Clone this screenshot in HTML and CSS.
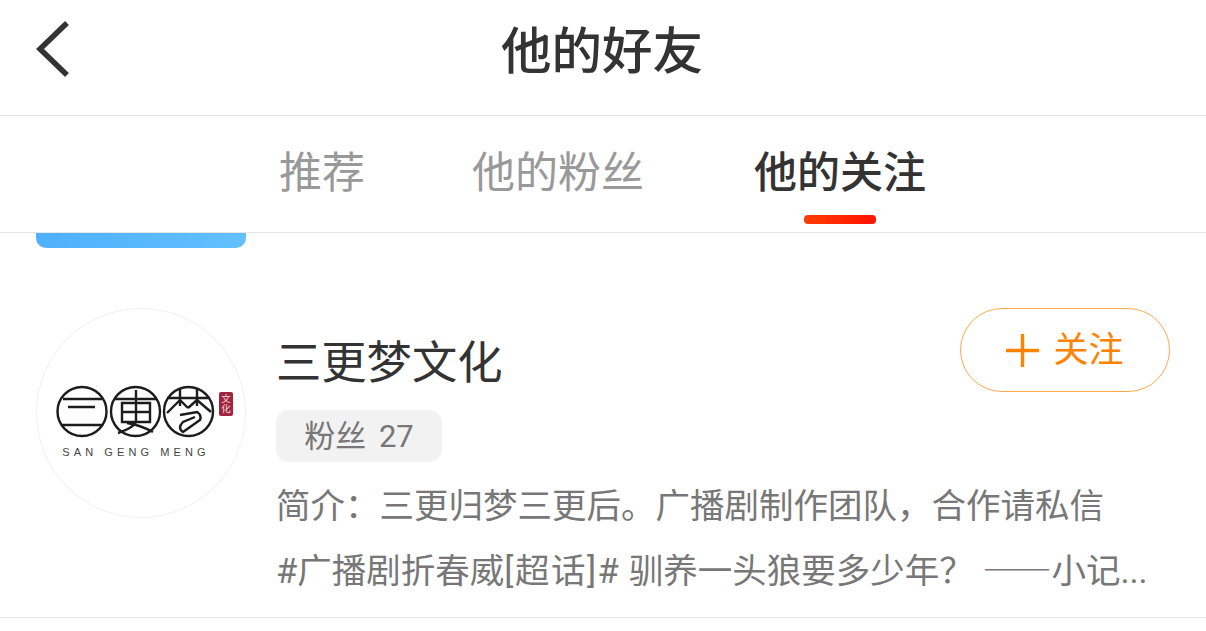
FILE: index.html
```html
<!DOCTYPE html>
<html lang="zh-CN">
<head>
  <meta charset="UTF-8" />
  <meta name="viewport" content="width=device-width, initial-scale=1.0" />
  <title>他的好友</title>
  <link rel="stylesheet" href="styles.css">
</head>
<body>

  <header class="topbar">
    <a class="back" href="#">
      <svg width="36" height="60" viewBox="0 0 36 60">
        <path d="M33 4 L6 30 L33 56" fill="none" stroke="#333" stroke-width="5.5" />
      </svg>
    </a>
    <h1>他的好友</h1>
  </header>

  <nav class="tabs">
    <a class="tab" href="#">推荐</a>
    <a class="tab" href="#">他的粉丝</a>
    <a class="tab active" href="#">他的关注</a>
  </nav>

  <main>
    <div class="strip"></div>

    <section class="user">
      <div class="avatar">
        <svg width="210" height="210" viewBox="0 0 210 210">
          <g fill="none" stroke="#1c1c1c" stroke-width="2.4">
            <!-- logo: three rings -->
            <circle cx="46" cy="103.5" r="24.5" />
            <path d="M27 91 H66 M32 99 H59 M25 117 H67" />
            <circle cx="99.5" cy="103.5" r="24.5" />
            <path d="M79 91 H121 M86 95 H114 V114 H86 Z M86 104 H114 M100 82 V114 Q97 120 82 125 M91 115 Q104 117 117 124" />
            <circle cx="152.5" cy="103.5" r="24.5" />
            <path d="M131 90 H174 M144 80 V98 M161 80 V98 M144 92 L131 105 M144 92 L152 100 M161 92 L152 100 M161 92 L175 104 M144 107 L161 104 Q166 107 164 112 L147 124 Q141 120 147 114 L159 109" />
          </g>
          <rect class="seal" x="183" y="84" width="14" height="24" rx="2" />
          <text class="seal-text" x="190" y="94">文</text>
          <text class="seal-text" x="190" y="104">化</text>
          <text class="logo-name" x="100" y="147.5">SAN GENG MENG</text>
        </svg>
      </div>

      <div class="info">
        <div class="name-row">
          <h2>三更梦文化</h2>
          <button class="follow">
            <svg width="33" height="33" viewBox="0 0 33 33">
              <path d="M1 16.5 H32 M16.5 1 V32" fill="none" stroke="#ff8200" stroke-width="3.4" stroke-linecap="round" />
            </svg>
            <span class="follow-label">关注</span>
          </button>
        </div>
        <div class="fans">粉丝 27</div>
        <p class="bio">简介&#xFF1A;三更归梦三更后。广播剧制作团队&#xFF0C;合作请私信</p>
        <p class="bio">#广播剧折春威<span class="tag">[超话]#</span> 驯养一头狼要多少年&#xFF1F; <span class="dash">——</span>小记...</p>
      </div>
    </section>
  </main>

</body>
</html>
```

FILE: styles.css
```css
body {
  margin: 0;
  font-family: Roboto, "Noto Sans CJK SC", sans-serif;
  background: #fff;
  color: #333;
  overflow: hidden;
}

a {
  text-decoration: none;
}

.topbar {
  height: 104px;
  padding: 0 2px 11px 0;
  border-bottom: 1px solid #e6e6e6;
  display: flex;
  align-items: center;
  justify-content: center;
  position: relative;
}

.topbar h1 {
  margin: 0;
  font-size: 50.5px;
  font-weight: 500;
  line-height: 1;
  color: #333;
}

.back {
  position: absolute;
  left: 34px;
  top: 19px;
  display: block;
  line-height: 0;
}

.tabs {
  height: 116px;
  padding-right: 1px;
  border-bottom: 1px solid #e6e6e6;
  display: flex;
  justify-content: center;
  gap: 107px;
}

.tab {
  display: flex;
  flex-direction: column;
  align-items: center;
  padding-top: 32px;
  font-size: 43px;
  line-height: 50px;
  color: #999;
}

.tab.active {
  margin-left: 3px;
  color: #333;
  font-weight: 500;
}

.tab.active::after {
  content: "";
  display: block;
  width: 72px;
  height: 9px;
  margin-top: 17px;
  border-radius: 4px;
  background: linear-gradient(90deg, #ff3d00, #ff1200);
}

.strip {
  width: 210px;
  height: 15px;
  margin-left: 36px;
  border-radius: 0 0 10px 10px;
  background: linear-gradient(90deg, #4fb0fb, #62c0ff);
}

.user {
  display: flex;
  height: 370px;
  padding: 60px 36px 0;
  box-sizing: border-box;
  border-bottom: 1px solid #e6e6e6;
}

.avatar {
  flex: none;
  width: 210px;
  height: 210px;
  border-radius: 50%;
  box-shadow: inset 0 0 0 1px #f1f1f1;
  line-height: 0;
}

.seal {
  fill: #a3243f;
}

.seal-text {
  fill: #f0d8dc;
  font-size: 9.5px;
  text-anchor: middle;
}

.logo-name {
  fill: #444;
  font-family: "Liberation Sans", sans-serif;
  font-size: 11px;
  letter-spacing: 4.1px;
  text-anchor: middle;
}

.info {
  flex: 1;
  margin-left: 31px;
  min-width: 0;
}

.name-row {
  display: flex;
  justify-content: space-between;
  align-items: flex-start;
  height: 102px;
}

.name-row h2 {
  margin: 29px 0 0 -1px;
  font-size: 45.3px;
  font-weight: 400;
  line-height: 54px;
  color: #333;
}

.follow {
  display: flex;
  align-items: center;
  justify-content: center;
  gap: 14px;
  width: 210px;
  height: 84px;
  padding: 0;
  border: 1.5px solid #ffa94d;
  border-radius: 42px;
  background: #fff;
  color: #ff8200;
  font-family: inherit;
  font-size: 35px;
}

.follow-label {
  line-height: 1;
}

.fans {
  display: flex;
  align-items: center;
  justify-content: center;
  width: 166px;
  height: 46px;
  padding-bottom: 6px;
  margin-left: -1px;
  border-radius: 13px;
  background: #f2f2f2;
  color: #777;
  font-size: 31px;
  word-spacing: 5px;
}

.bio {
  margin: 14px 0 0 -1px;
  font-size: 34.5px;
  line-height: 49px;
  color: #777;
  white-space: nowrap;
}

.fans + .bio {
  margin-top: 20px;
}

.fans + .bio + .bio {
  margin-top: 13px;
}

.tag {
  letter-spacing: 1.5px;
}

.dash {
  font-family: "Noto Sans CJK SC", sans-serif;
}
```
